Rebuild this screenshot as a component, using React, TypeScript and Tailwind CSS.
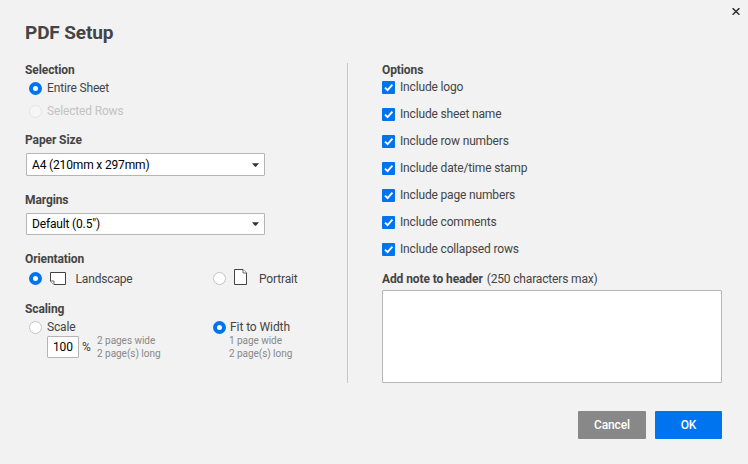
import React from "react";

function Radio({ checked = false, faded = false }: { checked?: boolean; faded?: boolean }) {
  return (
    <span
      className={
        "block h-[13px] w-[13px] shrink-0 rounded-full " +
        (checked
          ? "border-4 border-[#0073ef] bg-white"
          : faded
            ? "border border-[#e4e4e4] bg-[#f6f6f6]"
            : "border border-[#c4c4c4] bg-white")
      }
    />
  );
}

function Heading({ children }: { children: React.ReactNode }) {
  return <h2 className="h-[14px] text-[12px] leading-[14px] font-bold tracking-[-0.1px]">{children}</h2>;
}

function Select({ value, className }: { value: string; className: string }) {
  return (
    <div
      className={
        "ml-px flex w-[239px] items-center justify-between rounded-[1px] border border-[#b5b5b5] bg-white pr-[5px] pl-[5px] text-[12px] text-black " +
        className
      }
    >
      <span>{value}</span>
      <svg width="7" height="4" viewBox="0 0 7 4" fill="#333">
        <path d="M0 .3h7L4 3.7H3z" />
      </svg>
    </div>
  );
}

function Option({ label }: { label: string }) {
  return (
    <li className="flex h-[13px] items-center">
      <span className="flex h-[13px] w-[13px] items-center justify-center rounded-[1px] bg-[#0073ef]">
        <svg width="13" height="13" viewBox="0 0 13 13" fill="none" stroke="#fff" strokeWidth="1.9">
          <path d="M3 6.6l2.6 2.5L10.4 3.7" />
        </svg>
      </span>
      <span className="ml-[5px] -mt-[2px]">{label}</span>
    </li>
  );
}

const options = [
  "Include logo",
  "Include sheet name",
  "Include row numbers",
  "Include date/time stamp",
  "Include page numbers",
  "Include comments",
  "Include collapsed rows",
];

export default function App() {
  return (
    <div className="h-[464px] w-[748px] overflow-hidden bg-[#f2f2f2] font-[Roboto,sans-serif] text-[12px] leading-[14px] tracking-[-0.16px] whitespace-nowrap text-[#444]">
      <div className="flex h-[63px] justify-between pl-[25px]">
        <h1 className="mt-[22px] text-[19px] leading-[21px] font-bold tracking-[-0.12px]">PDF Setup</h1>
        <svg className="mt-2 mr-2" width="8" height="7" viewBox="0 0 8 7" stroke="#333" strokeWidth="1.5">
          <path d="M.6 .2l6.8 6.6M7.4 .2L.6 6.8" />
        </svg>
      </div>

      <div className="flex h-[320px] pl-[25px]">
        <section className="w-[322px]">
          <Heading>Selection</Heading>
          <div className="mt-[5px] ml-1 flex h-[13px] items-center gap-[5px]">
            <Radio checked />
            <span className="-mt-[2px]">Entire Sheet</span>
          </div>
          <div className="mt-[9px] ml-1 flex h-[14px] items-center gap-[5px] text-[#c3c3c3]">
            <Radio faded />
            <span>Selected Rows</span>
          </div>

          <div className="mt-[15px]">
            <Heading>Paper Size</Heading>
          </div>
          <Select value="A4 (210mm x 297mm)" className="mt-[6px] h-[23px]" />

          <div className="mt-[17px]">
            <Heading>Margins</Heading>
          </div>
          <Select value={'Default (0.5")'} className="mt-[6px] h-[22px]" />

          <div className="mt-[17px]">
            <Heading>Orientation</Heading>
          </div>
          <div className="mt-[3px] ml-1 flex h-[19px]">
            <div className="flex w-[184px]">
              <div className="mt-[3px]">
                <Radio checked />
              </div>
              <svg className="mt-[3px] ml-2" width="16" height="13" viewBox="0 0 16 13" fill="#fff" stroke="#444">
                <path d="M.5 .5h15v12H4L.5 9z" />
                <path d="M.5 9h3.5v3.5" strokeWidth=".8" />
              </svg>
              <span className="mt-[3px] ml-[9.5px]">Landscape</span>
            </div>
            <div className="flex">
              <div className="mt-[3px]">
                <Radio />
              </div>
              <svg className="ml-2" width="13" height="16" viewBox="0 0 13 16" fill="#fff" stroke="#444">
                <path d="M.5 .5h8.5l3.5 3.5v11.5H.5z" />
                <path d="M9 .5v3.5h3.5" strokeWidth=".8" />
              </svg>
              <span className="mt-[3px] ml-3">Portrait</span>
            </div>
          </div>

          <div className="mt-[14px]">
            <Heading>Scaling</Heading>
          </div>
          <div className="mt-1 ml-1 flex">
            <div className="w-[184px]">
              <div className="flex h-[14px] items-center gap-[5px]">
                <Radio />
                <span>Scale</span>
              </div>
              <div className="mt-[2px] ml-[18px] flex h-[22px] items-center">
                <div className="flex h-[22px] w-8 items-center justify-center rounded-[1px] border border-[#b5b5b5] bg-white tracking-normal text-black">
                  100
                </div>
                <span className="ml-[3px] w-[9px] text-[12px]">%</span>
                <div className="ml-[6px] text-[10px] leading-[13px] tracking-[-0.03px] text-[#888]">
                  <div>2 pages wide</div>
                  <div>2 page(s) long</div>
                </div>
              </div>
            </div>
            <div>
              <div className="flex h-[14px] items-center gap-1">
                <Radio checked />
                <span className="tracking-[-0.08px]">Fit to Width</span>
              </div>
              <div className="ml-4 text-[10px] leading-[13px] tracking-[-0.05px] text-[#888]">
                <div>1 page wide</div>
                <div>2 page(s) long</div>
              </div>
            </div>
          </div>
        </section>

        <div className="w-px bg-[#c8c8c8]" />

        <section className="ml-[34px] w-[340px]">
          <Heading>Options</Heading>
          <ul className="mt-1 flex flex-col gap-[14px]">
            {options.map((label) => (
              <Option key={label} label={label} />
            ))}
          </ul>
          <div className="mt-4 flex gap-1">
            <Heading>Add note to header</Heading>
            <span>(250 characters max)</span>
          </div>
          <div className="mt-[4px] h-[93px] rounded-[1px] border border-[#b5b5b5] bg-white" />
        </section>
      </div>

      <div className="mt-7 mr-[26px] flex justify-end gap-[9px] font-medium text-white">
        <button className="h-7 w-[68px] rounded-[1px] bg-[#888]">Cancel</button>
        <button className="h-7 w-[67px] rounded-[1px] bg-[#0073ef]">OK</button>
      </div>
    </div>
  );
}
